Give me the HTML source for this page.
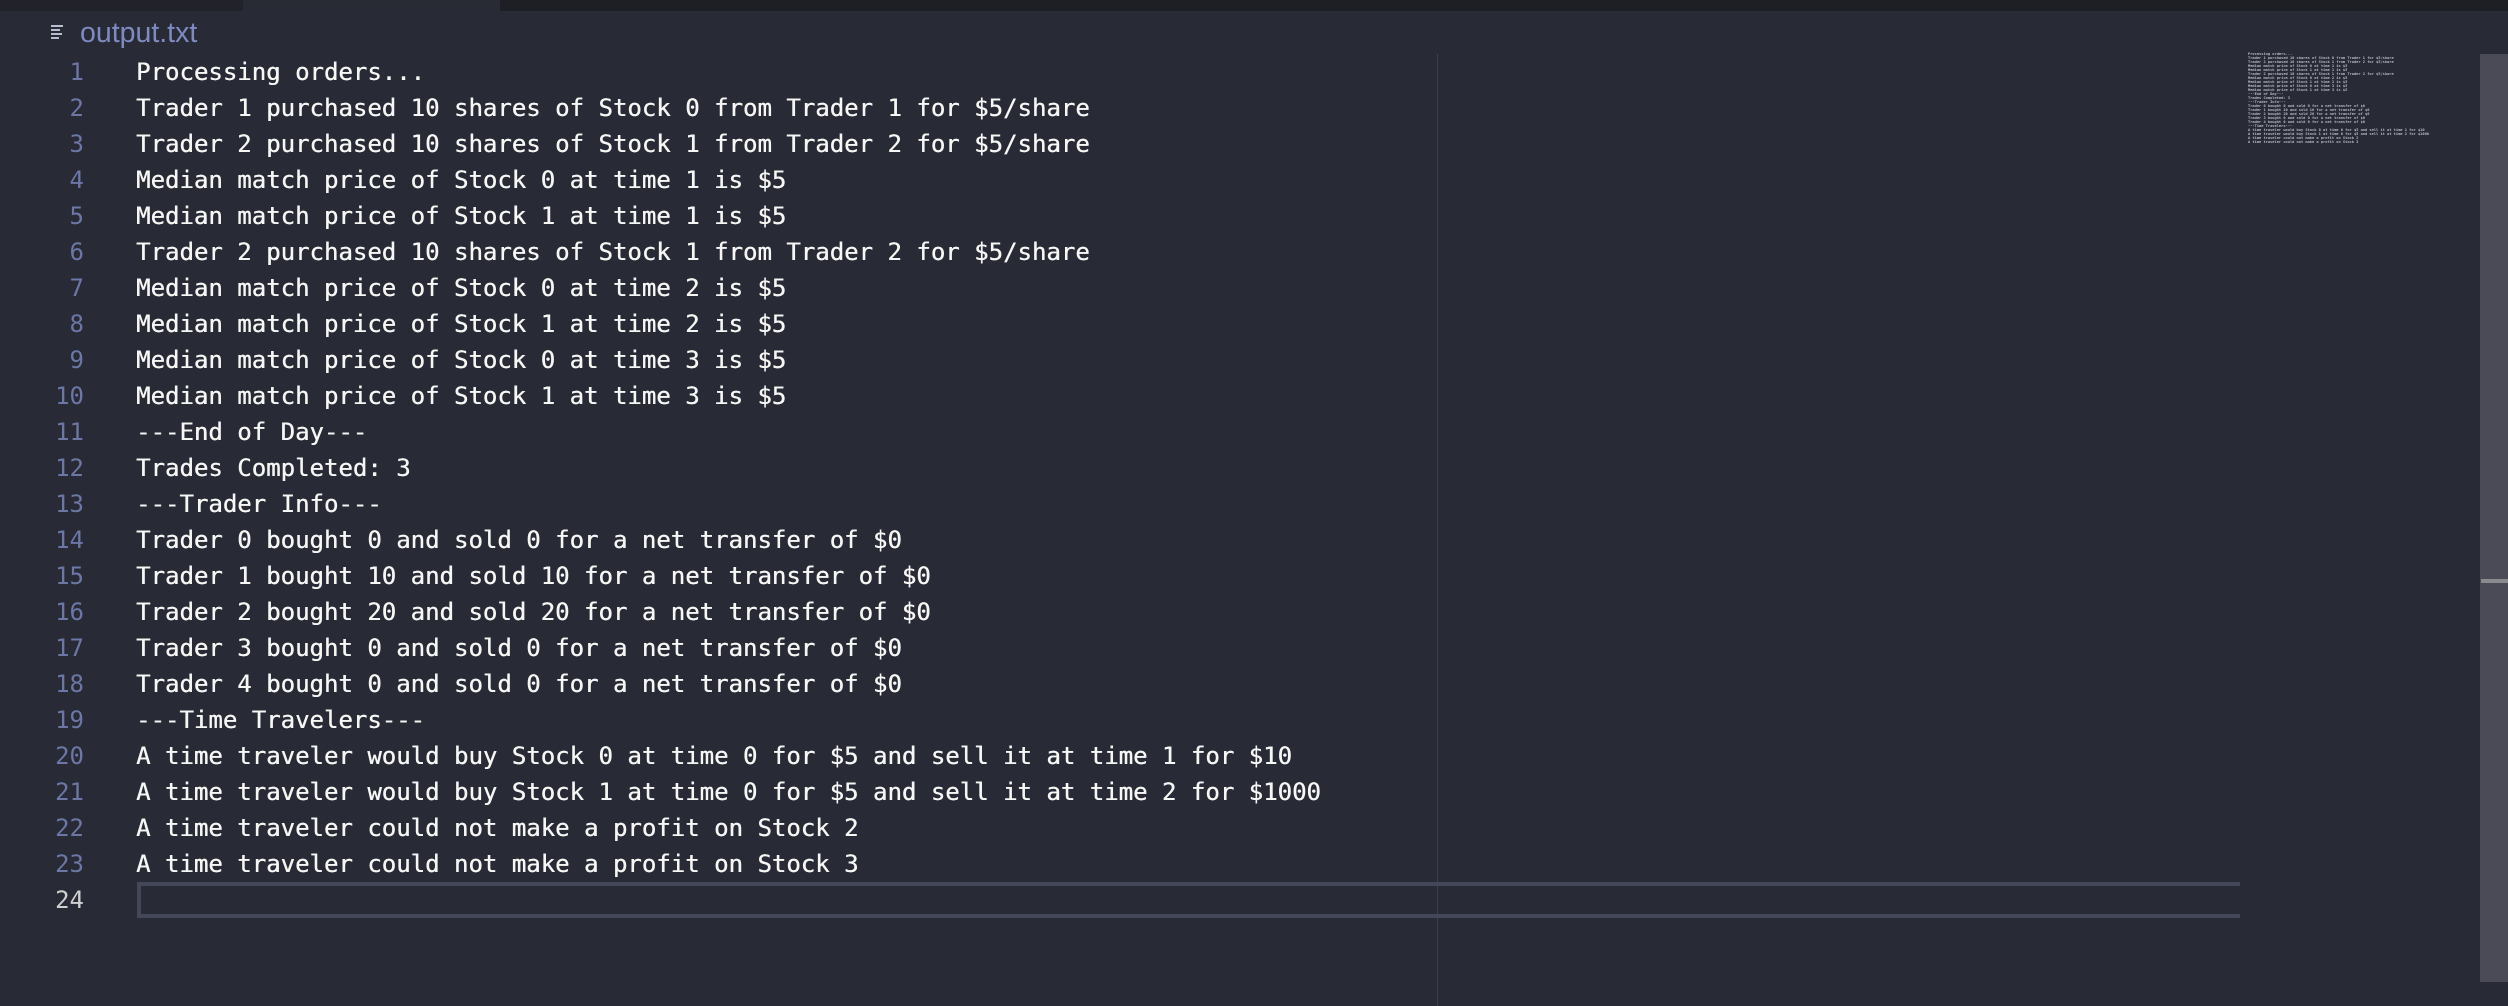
<!DOCTYPE html>
<html><head><meta charset="utf-8"><style>
*{margin:0;padding:0;box-sizing:border-box}
body{width:2508px;height:1006px;overflow:hidden;background:#282a36;position:relative;font-family:"DejaVu Sans Mono","Liberation Mono",monospace}
#top{position:absolute;left:0;top:0;width:2508px;height:11px;background:#1e1f25}
#top .a{position:absolute;left:0;top:0;width:243px;height:11px;background:#22232a}
#top .b{position:absolute;left:243px;top:0;width:257px;height:11px;background:#282a34}
#tab{position:absolute;left:80px;top:15px;height:36px;line-height:36px;font-family:"Liberation Sans",sans-serif;font-size:28.5px;color:#7f8ac0}
#icon{position:absolute;left:50px;top:24px;width:16px;height:16px}
#lines{position:absolute;left:0;top:54px}
.l{height:36px;line-height:36px;font-size:24px;white-space:pre;position:relative}
.n{position:absolute;width:84px;text-align:right;color:#6c77a6;left:0}
.t{position:absolute;left:136px;color:#f6f6f4;text-shadow:0.4px 0 0 #f6f6f4}
#vline{position:absolute;left:1437px;top:54px;width:1px;height:952px;background:#3c3e4b}
#cur{position:absolute;left:137px;top:882px;width:2103px;height:36px;border:4px solid #44465a;border-right:none}
#sb{position:absolute;left:2480px;top:54px;width:28px;height:928px;background:#4a4b57}
#mk{position:absolute;left:2481px;top:579px;width:27px;height:4px;background:#8a8b8e}
#mini{position:absolute;left:2248px;top:52px;font-size:11px;line-height:12px;white-space:pre;color:#b8bac2;transform:scale(0.3333);transform-origin:0 0;font-weight:bold}
</style></head><body>
<div id="top"><div class="a"></div><div class="b"></div></div>
<svg id="icon" viewBox="0 0 16 16"><g stroke="#b9bdd0" stroke-width="2"><line x1="1" y1="2" x2="13" y2="2"/><line x1="1" y1="6" x2="10" y2="6"/><line x1="1" y1="10" x2="12" y2="10"/><line x1="1" y1="14" x2="9" y2="14"/></g></svg>
<div id="tab">output.txt</div>
<div id="vline"></div>
<div id="cur"></div>
<div id="lines">
<div class="l"><span class="n">1</span><span class="t">Processing orders...</span></div>
<div class="l"><span class="n">2</span><span class="t">Trader 1 purchased 10 shares of Stock 0 from Trader 1 for $5/share</span></div>
<div class="l"><span class="n">3</span><span class="t">Trader 2 purchased 10 shares of Stock 1 from Trader 2 for $5/share</span></div>
<div class="l"><span class="n">4</span><span class="t">Median match price of Stock 0 at time 1 is $5</span></div>
<div class="l"><span class="n">5</span><span class="t">Median match price of Stock 1 at time 1 is $5</span></div>
<div class="l"><span class="n">6</span><span class="t">Trader 2 purchased 10 shares of Stock 1 from Trader 2 for $5/share</span></div>
<div class="l"><span class="n">7</span><span class="t">Median match price of Stock 0 at time 2 is $5</span></div>
<div class="l"><span class="n">8</span><span class="t">Median match price of Stock 1 at time 2 is $5</span></div>
<div class="l"><span class="n">9</span><span class="t">Median match price of Stock 0 at time 3 is $5</span></div>
<div class="l"><span class="n">10</span><span class="t">Median match price of Stock 1 at time 3 is $5</span></div>
<div class="l"><span class="n">11</span><span class="t">---End of Day---</span></div>
<div class="l"><span class="n">12</span><span class="t">Trades Completed: 3</span></div>
<div class="l"><span class="n">13</span><span class="t">---Trader Info---</span></div>
<div class="l"><span class="n">14</span><span class="t">Trader 0 bought 0 and sold 0 for a net transfer of $0</span></div>
<div class="l"><span class="n">15</span><span class="t">Trader 1 bought 10 and sold 10 for a net transfer of $0</span></div>
<div class="l"><span class="n">16</span><span class="t">Trader 2 bought 20 and sold 20 for a net transfer of $0</span></div>
<div class="l"><span class="n">17</span><span class="t">Trader 3 bought 0 and sold 0 for a net transfer of $0</span></div>
<div class="l"><span class="n">18</span><span class="t">Trader 4 bought 0 and sold 0 for a net transfer of $0</span></div>
<div class="l"><span class="n">19</span><span class="t">---Time Travelers---</span></div>
<div class="l"><span class="n">20</span><span class="t">A time traveler would buy Stock 0 at time 0 for $5 and sell it at time 1 for $10</span></div>
<div class="l"><span class="n">21</span><span class="t">A time traveler would buy Stock 1 at time 0 for $5 and sell it at time 2 for $1000</span></div>
<div class="l"><span class="n">22</span><span class="t">A time traveler could not make a profit on Stock 2</span></div>
<div class="l"><span class="n">23</span><span class="t">A time traveler could not make a profit on Stock 3</span></div>
<div class="l"><span class="n" style="color:#d0d0d0">24</span><span class="t"></span></div>
</div>
<div id="sb"></div><div id="mk"></div>
<div id="mini">Processing orders...
Trader 1 purchased 10 shares of Stock 0 from Trader 1 for $5/share
Trader 2 purchased 10 shares of Stock 1 from Trader 2 for $5/share
Median match price of Stock 0 at time 1 is $5
Median match price of Stock 1 at time 1 is $5
Trader 2 purchased 10 shares of Stock 1 from Trader 2 for $5/share
Median match price of Stock 0 at time 2 is $5
Median match price of Stock 1 at time 2 is $5
Median match price of Stock 0 at time 3 is $5
Median match price of Stock 1 at time 3 is $5
---End of Day---
Trades Completed: 3
---Trader Info---
Trader 0 bought 0 and sold 0 for a net transfer of $0
Trader 1 bought 10 and sold 10 for a net transfer of $0
Trader 2 bought 20 and sold 20 for a net transfer of $0
Trader 3 bought 0 and sold 0 for a net transfer of $0
Trader 4 bought 0 and sold 0 for a net transfer of $0
---Time Travelers---
A time traveler would buy Stock 0 at time 0 for $5 and sell it at time 1 for $10
A time traveler would buy Stock 1 at time 0 for $5 and sell it at time 2 for $1000
A time traveler could not make a profit on Stock 2
A time traveler could not make a profit on Stock 3</div>
</body></html>
